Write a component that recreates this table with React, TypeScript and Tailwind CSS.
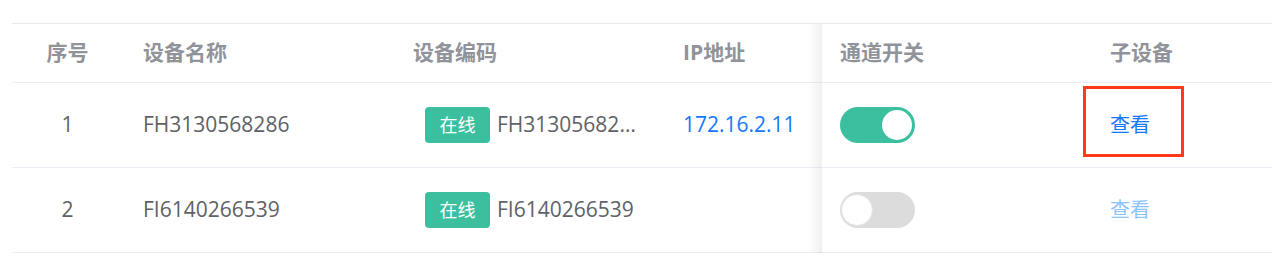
import React from 'react';

const font = { fontFamily: '"Open Sans", "Noto Sans CJK SC", sans-serif' };

type Row = { id: number; name: string; code: string; ip: string; on: boolean; active: boolean };

const rows: Row[] = [
  { id: 1, name: 'FH3130568286', code: 'FH3130568286', ip: '172.16.2.11', on: true, active: true },
  { id: 2, name: 'FI6140266539', code: 'FI6140266539', ip: '', on: false, active: false },
];

function Switch({ on }: { on: boolean }) {
  return on ? (
    <div className="flex h-[36px] w-[75px] items-center justify-end rounded-full bg-[#3bbf9f] pr-[3px]">
      <div className="h-[30px] w-[30px] rounded-full bg-white" />
    </div>
  ) : (
    <div className="flex h-[36px] w-[75px] items-center rounded-full bg-[#dcdcdc] pl-[1px]">
      <div className="h-[32px] w-[32px] rounded-full border border-[#e4e4e4] bg-white" />
    </div>
  );
}

export default function App() {
  return (
    <div className="h-[268px] w-[1272px] bg-white pl-[12px] pt-[23px]" style={font}>
      <div className="flex border-t border-[#e6e8ee]">
        {/* scrolling columns */}
        <div className="w-[810px]">
          <div className="flex h-[59px] items-center border-b border-[#ebeef5] text-[21px] font-bold text-[#909399]">
            <div className="w-[111px] text-center">序号</div>
            <div className="w-[270px] pl-[20px]">设备名称</div>
            <div className="w-[270px] pl-[20px]">设备编码</div>
            <div className="w-[159px] pl-[20px]">IP地址</div>
          </div>
          {rows.map((r) => (
            <div key={r.id} className="flex h-[85px] items-center border-b border-[#ebeef5] text-[21px] text-[#606266]">
              <div className="w-[111px] text-center">{r.id}</div>
              <div className="w-[270px] pl-[20px]">{r.name}</div>
              <div className="flex w-[270px] items-center gap-[7px] pl-[32px]">
                <span className="flex h-[36px] w-[65px] shrink-0 items-center justify-center rounded-[4px] bg-[#3bbf9f] text-[18px] text-white">
                  在线
                </span>
                <span className="max-w-[142px] truncate">{r.code}</span>
              </div>
              <div className="w-[159px] pl-[20px] text-[#1677ff]">{r.ip}</div>
            </div>
          ))}
        </div>

        {/* fixed right columns */}
        <div className="relative w-[450px] bg-white">
          <div className="absolute -left-[14px] top-0 bottom-0 w-[14px] bg-gradient-to-l from-black/[0.06] to-transparent" />
          <div className="flex h-[59px] items-center border-b border-[#ebeef5] text-[21px] font-bold text-[#909399]">
            <div className="w-[268px] pl-[18px]">通道开关</div>
            <div className="w-[182px] pl-[20px]">子设备</div>
          </div>
          {rows.map((r) => (
            <div key={r.id} className="flex h-[85px] items-center border-b border-[#ebeef5] text-[20px]">
              <div className="w-[268px] pl-[18px]">
                <Switch on={r.on} />
              </div>
              <div className="relative w-[182px] pl-[20px]">
                <span className={r.active ? 'text-[#1677ff]' : 'text-[#8cc4ff]'}>查看</span>
                {r.active && (
                  <div className="absolute left-[-7px] top-[-24px] h-[71px] w-[101px] border-[3px] border-[#ff3a1c]" />
                )}
              </div>
            </div>
          ))}
        </div>
      </div>
    </div>
  );
}
